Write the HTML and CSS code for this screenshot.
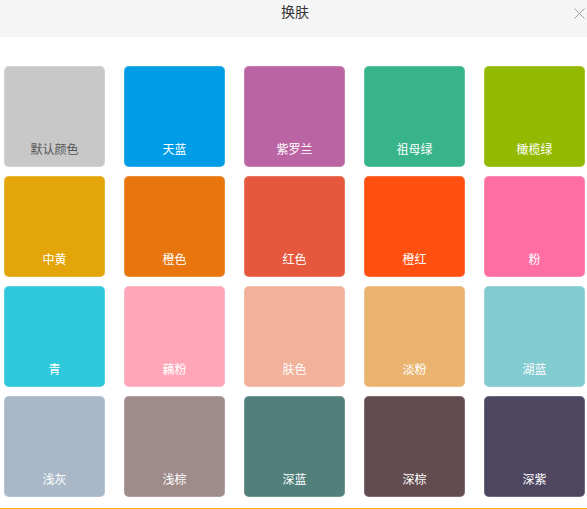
FILE: index.html
```html
<!DOCTYPE html>
<html lang="zh">
<head>
<meta charset="utf-8">
<title>换肤</title>
<link rel="stylesheet" href="styles.css">
</head>
<body>
<div class="dialog">
  <div class="header">
    <span class="title">换肤</span>
    <span class="close">
      <svg width="11" height="11" viewBox="0 0 11 11"><path d="M0.5 0.5L10.5 10.5M10.5 0.5L0.5 10.5" stroke="#a0a0a0" stroke-width="1" fill="none"/></svg>
    </span>
  </div>
  <div class="grid">
    <div class="tile t-default"><span>默认颜色</span></div>
    <div class="tile t-sky"><span>天蓝</span></div>
    <div class="tile t-violet"><span>紫罗兰</span></div>
    <div class="tile t-emerald"><span>祖母绿</span></div>
    <div class="tile t-olive"><span>橄榄绿</span></div>

    <div class="tile t-yellow"><span>中黄</span></div>
    <div class="tile t-orange"><span>橙色</span></div>
    <div class="tile t-red"><span>红色</span></div>
    <div class="tile t-orangered"><span>橙红</span></div>
    <div class="tile t-pink"><span>粉</span></div>

    <div class="tile t-cyan"><span>青</span></div>
    <div class="tile t-lotus"><span>藕粉</span></div>
    <div class="tile t-skin"><span>肤色</span></div>
    <div class="tile t-lightpink"><span>淡粉</span></div>
    <div class="tile t-lake"><span>湖蓝</span></div>

    <div class="tile t-lightgray"><span>浅灰</span></div>
    <div class="tile t-lightbrown"><span>浅棕</span></div>
    <div class="tile t-deepblue"><span>深蓝</span></div>
    <div class="tile t-deepbrown"><span>深棕</span></div>
    <div class="tile t-deeppurple"><span>深紫</span></div>
  </div>
</div>
</body>
</html>
```

FILE: styles.css
```css
html, body {
  margin: 0;
  padding: 0;
  background: #fff;
}
body {
  font-family: "Noto Sans CJK SC", "Noto Sans", sans-serif;
  width: 587px;
  height: 509px;
  overflow: hidden;
}
.dialog {
  height: 508px;
  border-bottom: 1px solid #ffac1a;
  display: flex;
  flex-direction: column;
}
.header {
  height: 37px;
  background: #f5f5f5;
  display: flex;
  align-items: center;
  justify-content: center;
  position: relative;
}
.title {
  font-size: 14px;
  color: #333;
  line-height: 1;
  margin-top: -15px;
  margin-left: 3px;
}
.close {
  position: absolute;
  right: 2px;
  top: 8px;
  width: 11px;
  height: 11px;
  display: flex;
}
.grid {
  display: grid;
  grid-template-columns: repeat(5, 101px);
  grid-auto-rows: 101px;
  column-gap: 19px;
  row-gap: 9px;
  padding: 29px 0 0 4px;
}
.tile {
  border-radius: 5px;
  display: flex;
  align-items: flex-end;
  justify-content: center;
  box-sizing: border-box;
  padding-bottom: 11px;
  color: #fff;
  font-size: 12px;
  line-height: 14px;
  box-shadow: inset 0 0 0 1px rgba(255,255,255,0.18);
}
.t-default { background: #c8c8c8; color: #555; }
.t-sky { background: #009ce6; }
.t-violet { background: #bb64a4; }
.t-emerald { background: #37b48a; }
.t-olive { background: #93b900; }
.t-yellow { background: #e3a509; }
.t-orange { background: #e8750e; }
.t-red { background: #e5583e; }
.t-orangered { background: #ff5012; }
.t-pink { background: #ff6ea2; }
.t-cyan { background: #2ec7db; }
.t-lotus { background: #ffa7b8; }
.t-skin { background: #f1b19a; }
.t-lightpink { background: #eab470; }
.t-lake { background: #82cbd0; }
.t-lightgray { background: #a8b8c8; }
.t-lightbrown { background: #9e8b8a; }
.t-deepblue { background: #517f7c; }
.t-deepbrown { background: #634c50; }
.t-deeppurple { background: #4e4660; }
```
